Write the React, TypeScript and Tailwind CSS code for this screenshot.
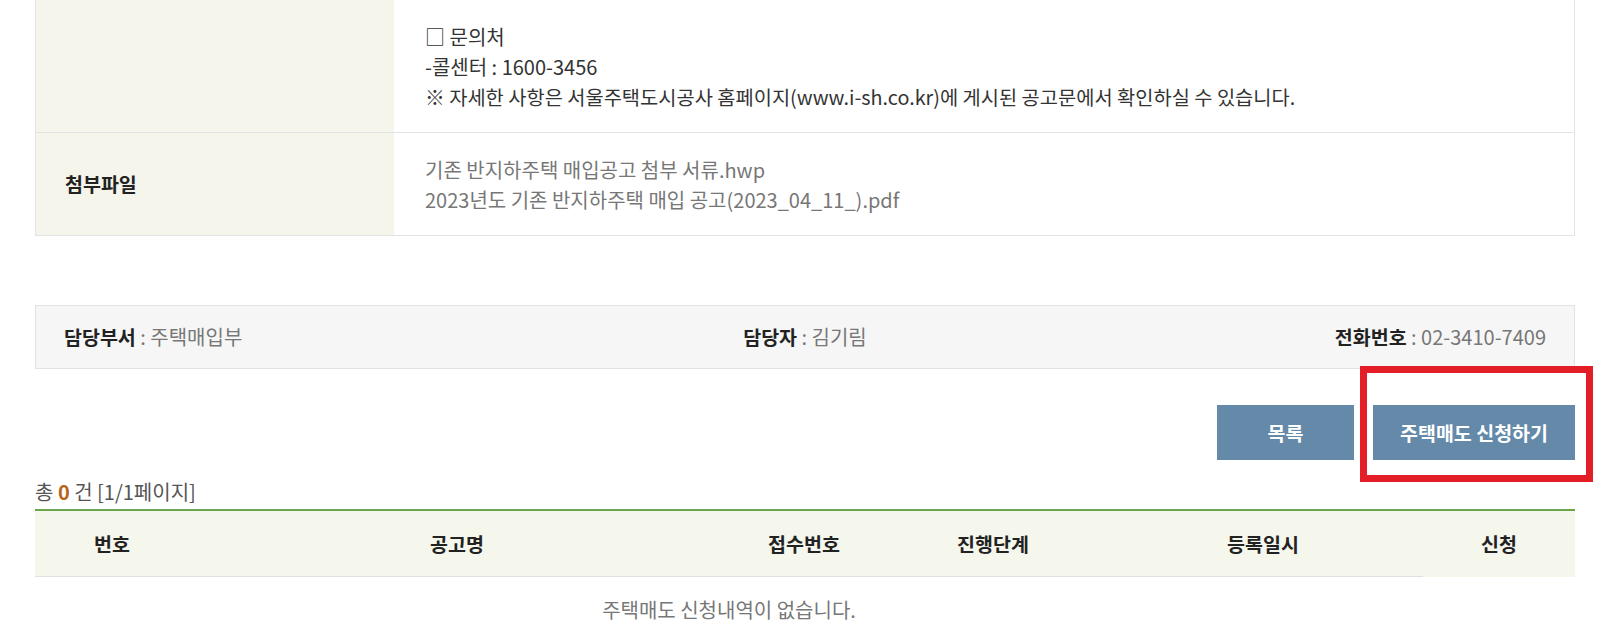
import React from "react";

const font = { fontFamily: '"Noto Sans CJK KR", "Noto Sans", sans-serif' };

export default function App() {
  return (
    <div className="bg-white w-[1621px] h-[625px] overflow-hidden relative text-[#333]" style={font}>
      <div className="ml-[35px] w-[1540px]">
        {/* detail table */}
        <div className="border-x border-b border-[#e3e3e3]">
          <div className="flex">
            <div className="w-[358px] shrink-0 bg-[#f5f5ec]" />
            <div className="flex-1 pl-[31px] pt-[22px] pb-[20px] text-[20px] leading-[30px] text-[#333]">
              <div>□ 문의처</div>
              <div>-콜센터 : 1600-3456</div>
              <div className="text-[19.8px]">※ 자세한 사항은 서울주택도시공사 홈페이지(www.i-sh.co.kr)에 게시된 공고문에서 확인하실 수 있습니다.</div>
            </div>
          </div>
          <div className="flex border-t border-[#e3e3e3]">
            <div className="w-[358px] shrink-0 bg-[#f5f5ec] flex items-center pl-[29px] text-[19.5px] font-bold text-[#222]">
              첨부파일
            </div>
            <div className="flex-1 pl-[31px] pt-[22px] pb-[20px] text-[20px] leading-[30px] text-[#777]">
              <div>기존 반지하주택 매입공고 첨부 서류.hwp</div>
              <div>2023년도 기존 반지하주택 매입 공고(2023_04_11_).pdf</div>
            </div>
          </div>
        </div>

        {/* info box */}
        <div className="mt-[69px] h-[64px] bg-[#f6f6f6] border border-[#e2e2e2] grid grid-cols-3 items-center px-[28px] text-[20px]">
          <div className="text-left">
            <span className="font-bold text-[#222] text-[19.5px]">담당부서</span>
            <span className="text-[#777]"> : 주택매입부</span>
          </div>
          <div className="text-center">
            <span className="font-bold text-[#222] text-[19.5px]">담당자</span>
            <span className="text-[#777]"> : 김기림</span>
          </div>
          <div className="text-right">
            <span className="font-bold text-[#222] text-[19.5px]">전화번호</span>
            <span className="text-[#777]"> : 02-3410-7409</span>
          </div>
        </div>

        {/* buttons */}
        <div className="mt-[36px] flex justify-end gap-[19px]">
          <button className="w-[137px] h-[55px] bg-[#6489a9] text-white font-bold text-[19.5px]">목록</button>
          <button className="w-[202px] h-[55px] bg-[#6489a9] text-white font-bold text-[19.5px]">주택매도 신청하기</button>
        </div>

        {/* count */}
        <div className="mt-[20px] text-[20px] leading-[24px] text-[#555]">
          총 <span className="font-bold text-[#b8651b]">0</span> 건 [1/1페이지]
        </div>

        {/* list table */}
        <div className="mt-[5px] border-t-[2px] border-[#6da54f]">
          <div className="flex h-[66px] bg-[#f5f6ec] text-[19.5px] font-bold text-[#222]">
            <div className="w-[154px] flex items-center justify-center border-b border-[#e0e0e0]">번호</div>
            <div className="w-[536px] flex items-center justify-center border-b border-[#e0e0e0]">공고명</div>
            <div className="w-[158px] flex items-center justify-center border-b border-[#e0e0e0]">접수번호</div>
            <div className="w-[220px] flex items-center justify-center border-b border-[#e0e0e0]">진행단계</div>
            <div className="w-[320px] flex items-center justify-center border-b border-[#e0e0e0]">등록일시</div>
            <div className="w-[152px] flex items-center justify-center">신청</div>
          </div>
          <div className="flex">
            <div className="w-[1388px] text-center pt-[21px] text-[20px] leading-[24px] text-[#777]">
              주택매도 신청내역이 없습니다.
            </div>
          </div>
        </div>
      </div>

      {/* red annotation box */}
      <div className="absolute left-[1360px] top-[366px] w-[233px] h-[116px] border-[7px] border-[#e41e26]" />
    </div>
  );
}
